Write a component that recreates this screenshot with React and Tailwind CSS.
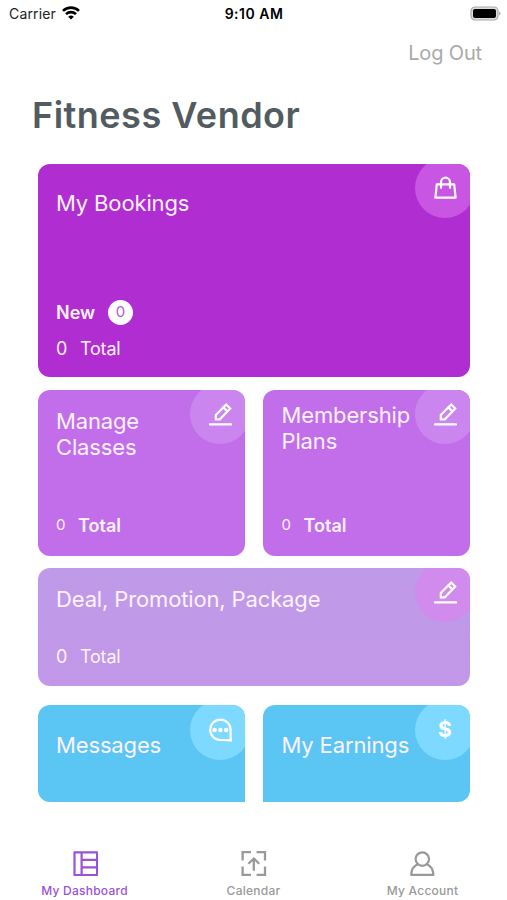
import React from "react";

const stroke = { fill: "none", stroke: "currentColor", strokeLinecap: "round", strokeLinejoin: "round" };

function BagIcon() {
  return (
    <svg viewBox="0 0 24 24" className="h-6 w-6" {...stroke} strokeWidth="2.2">
      <path d="M3.8 8.3h17.4l1.4 13.4H2.4z" />
      <path d="M8 11.8V6.2a4.5 4.5 0 0 1 9 0v5.6" />
    </svg>
  );
}

function PencilIcon() {
  return (
    <svg viewBox="0 0 24 24" className="h-6 w-6" {...stroke} strokeWidth="2.2">
      <path d="M2 22.4h21" />
      <path d="M7.8 17.3v-4.4L18.2 2.5l4 4-10.4 10.8z" strokeLinejoin="miter" />
      <path d="M15.4 5.4l3.8 3.8" />
    </svg>
  );
}

function ChatIcon() {
  return (
    <svg viewBox="0 0 24 24" className="h-6 w-6" {...stroke} strokeWidth="2.2">
      <path d="M12.4 22A10.2 10.2 0 1 1 22.6 12v7l.5 3.4z" />
      <g fill="currentColor" stroke="none">
        <circle cx="6.6" cy="12" r="2.3" />
        <circle cx="12.4" cy="12" r="2.3" />
        <circle cx="18.2" cy="12" r="2.3" />
      </g>
    </svg>
  );
}

function DashboardIcon() {
  return (
    <svg viewBox="0 0 26 26" className="h-[26px] w-[26px]" {...stroke} strokeWidth="2.2">
      <path d="M2.5 2.4h22.6V25H2.5zM9.6 2.4V25M9.6 9.9h15.5M9.6 17.4h15.5" />
    </svg>
  );
}

function CalendarIcon() {
  return (
    <svg viewBox="0 0 26 26" className="h-[26px] w-[26px]" fill="none" stroke="currentColor" strokeWidth="2.3">
      <path d="M1.6 10.4V2.2H10M15.6 2.2H24v8.2M24 16.6v8.2h-8.4M10 24.8H1.6v-8.2M12.8 20.8V8.8M7.4 13.8l5.4-5.3 5.4 5.3" />
    </svg>
  );
}

function AccountIcon() {
  return (
    <svg viewBox="0 0 26 26" className="h-[26px] w-[26px]" {...stroke} strokeWidth="2.2">
      <circle cx="12.3" cy="9.1" r="6.7" />
      <path d="M7.9 14.3C3.8 15.9 1.4 19 1.2 24.9h22.2c-.2-5.9-2.6-9-6.7-10.6" />
    </svg>
  );
}

function Card({ className, circle, icon, children }) {
  return (
    <section className={"relative overflow-hidden text-[#fff2ff] " + className}>
      {children}
      <div className={"absolute left-full -ml-[55px] h-[60px] w-[60px] rounded-full " + circle}>
        <div className="flex h-[60px] w-[60px] items-center justify-center text-white">{icon}</div>
      </div>
    </section>
  );
}

function Heading({ children, className = "" }) {
  return <h2 className={"text-[22px] leading-[26px] tracking-[-0.14px] whitespace-nowrap " + className}>{children}</h2>;
}

function Tab({ icon, label, className }) {
  return (
    <div className={"flex w-[169px] flex-col items-center " + className}>
      {icon}
      <span className="mt-[7px] text-[12px] leading-4 font-medium tracking-[0.25px] whitespace-nowrap">{label}</span>
    </div>
  );
}

export default function App() {
  return (
    <div className="flex h-[900px] w-[507px] flex-col overflow-hidden bg-white font-['Inter',sans-serif]">
      <header className="grid h-[26px] grid-cols-3 items-center pr-[6px] pl-[9px] text-[14px] text-black">
        <div className="flex items-center gap-[6px]">
          <span className="tracking-[0.15px] text-[#222]">Carrier</span>
          <svg viewBox="0 0 18 14" className="h-[14px] w-[18px]" fill="none" stroke="currentColor" strokeWidth="2.6">
            <path d="M1 4.9a11.3 11.3 0 0 1 16 0M4 8.2a7.1 7.1 0 0 1 10 0" />
            <path d="M9 13.6L6.2 10.8a4 4 0 0 1 5.6 0z" fill="currentColor" stroke="none" />
          </svg>
        </div>
        <span className="-ml-[2px] text-center font-semibold tracking-[0.5px] whitespace-nowrap">9:10 AM</span>
        <svg viewBox="0 0 31 15" className="h-[15px] w-[31px] justify-self-end">
          <rect x="1" y="1" width="27" height="13" rx="4" fill="#ddd" stroke="#aaa" strokeWidth="1.2" />
          <rect x="3" y="3" width="23" height="9" rx="2" fill="#000" />
          <path d="M29.2 5.5q2.5 2 0 4z" fill="#999" />
        </svg>
      </header>
      <div className="mt-[13px] flex h-[28px] items-center justify-end pr-[25px] text-[20px] tracking-[-0.15px] text-[#aaa]">Log Out</div>
      <h1 className="mt-[23px] ml-[32px] text-[36px] leading-[50px] font-semibold tracking-[0.5px] whitespace-nowrap text-[#515b60]">Fitness Vendor</h1>

      <main className="mt-[23.5px] ml-[38px] flex w-[432px] flex-col">
        <Card className="h-[213.5px] rounded-[12px] bg-[#b02dd2] pl-[18px]" circle="-top-[6px] bg-[#c955e3]" icon={<BagIcon />}>
          <Heading className="mt-[26px]">My Bookings</Heading>
          <div className="mt-[83.5px] flex h-[26px] items-center">
            <span className="w-[52px] text-[18px] font-semibold">New</span>
            <span className="flex h-[25px] w-[25px] items-center justify-center rounded-full bg-white text-[15px] text-[#b85bd0]">0</span>
          </div>
          <div className="mt-[10px] flex h-[26px] items-center text-[18px] tracking-[-0.2px]">
            <span className="w-6">0</span>
            <span>Total</span>
          </div>
        </Card>

        <div className="mt-[12.5px] flex gap-[18px]">
          <Card className="h-[166px] w-[207px] rounded-[12px] bg-[#c26eea] pl-[18px]" circle="-top-[6px] bg-[#ca86ee]" icon={<PencilIcon />}>
            <Heading className="mt-[18.5px]">Manage<br />Classes</Heading>
            <div className="mt-[52px] flex h-[26px] items-center">
              <span className="w-[22px] text-[15px]">0</span>
              <span className="text-[18px] font-semibold">Total</span>
            </div>
          </Card>
          <Card className="h-[166px] w-[207px] rounded-[12px] bg-[#c26eea] pl-[18.5px]" circle="-top-[6px] bg-[#ca86ee]" icon={<PencilIcon />}>
            <Heading className="mt-[12.5px]">Membership<br />Plans</Heading>
            <div className="mt-[58px] flex h-[26px] items-center">
              <span className="w-[22px] text-[15px]">0</span>
              <span className="text-[18px] font-semibold">Total</span>
            </div>
          </Card>
        </div>

        <Card className="mt-[12.8px] h-[118px] rounded-[12px] bg-[#c198e9] bg-linear-to-b from-[#bf9ae8] to-[#c297e9] pl-[18px]" circle="-top-[6px] bg-[#d08bed]" icon={<PencilIcon />}>
          <Heading className="mt-[17.7px]">Deal, Promotion, Package</Heading>
          <div className="mt-[32px] flex h-[26px] items-center text-[18px] tracking-[-0.2px]">
            <span className="w-6">0</span>
            <span>Total</span>
          </div>
        </Card>

        <div className="mt-[18.7px] flex gap-[18px]">
          <Card className="h-[97px] w-[207px] rounded-t-[12px] rounded-bl-[12px] bg-[#5bc6f3] pl-[18px]" circle="-top-[5px] bg-[#7dd9ff]" icon={<ChatIcon />}>
            <Heading className="mt-[27px] tracking-[-0.3px]">Messages</Heading>
          </Card>
          <Card className="h-[97px] w-[207px] rounded-t-[12px] rounded-br-[12px] bg-[#5bc6f3] pl-[18.5px]" circle="-top-[5px] bg-[#7dd9ff]" icon={<span className="text-[21px] font-bold">$</span>}>
            <Heading className="mt-[27px]">My Earnings</Heading>
          </Card>
        </div>
      </main>

      <nav className="mt-[48px] flex">
        <Tab icon={<DashboardIcon />} label="My Dashboard" className="text-[#9b51d8]" />
        <Tab icon={<CalendarIcon />} label="Calendar" className="text-[#999]" />
        <Tab icon={<AccountIcon />} label="My Account" className="text-[#999]" />
      </nav>
    </div>
  );
}
